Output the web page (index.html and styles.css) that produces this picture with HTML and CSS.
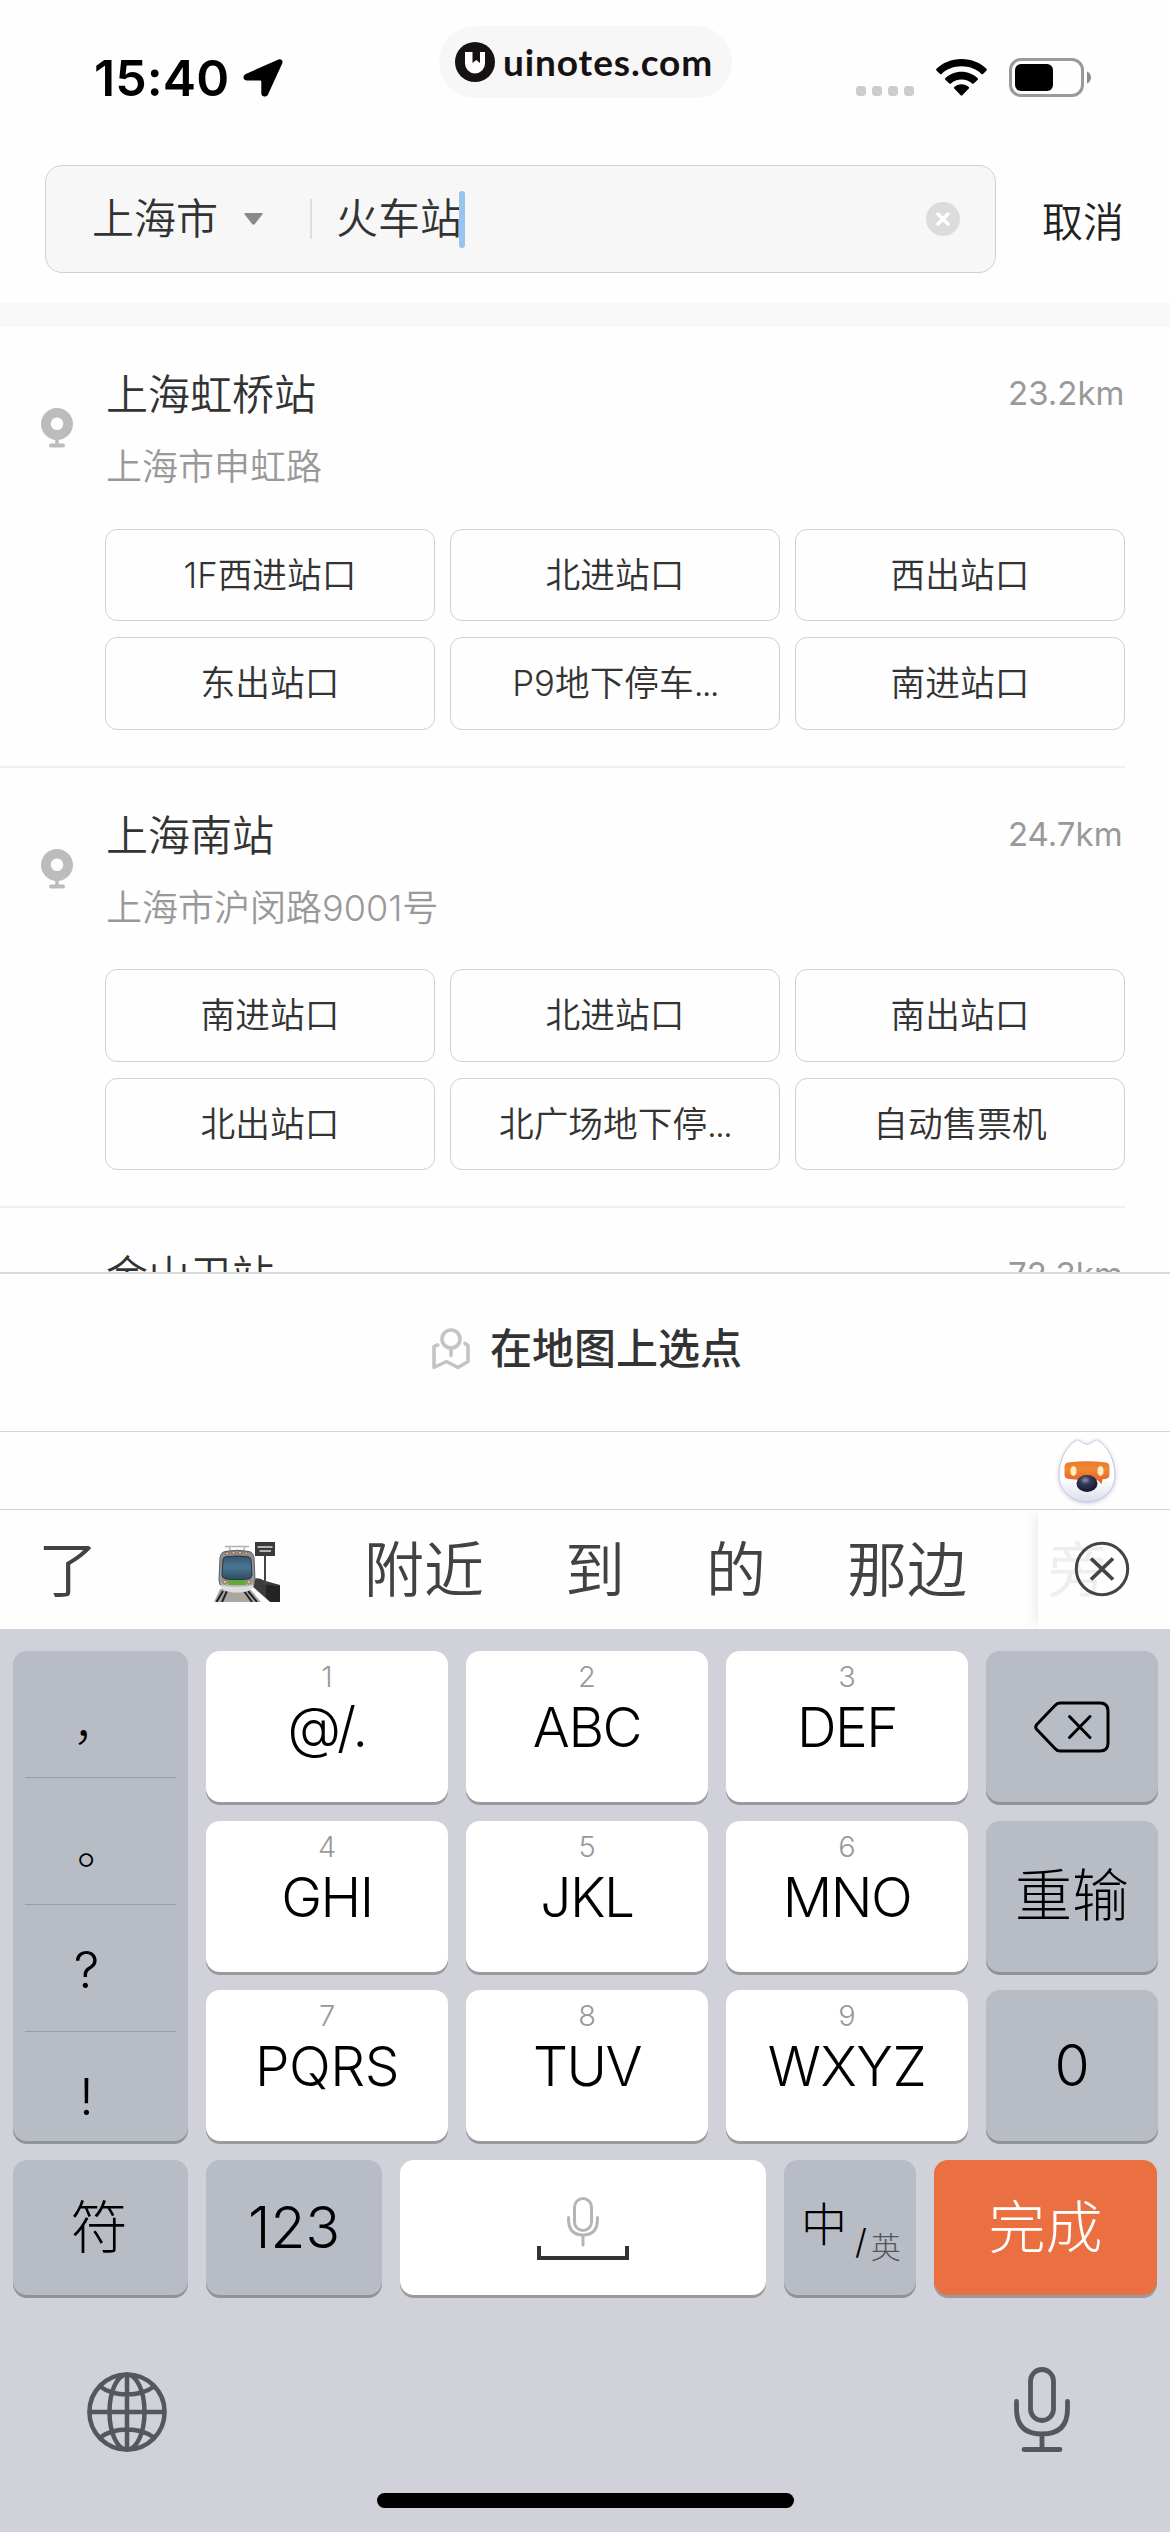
FILE: index.html
```html
<!DOCTYPE html>
<html lang="zh-CN">
<head>
<meta charset="utf-8">
<title>选择地点</title>
<link rel="stylesheet" href="styles.css">
</head>
<body>
<div class="screen">
  <header class="status">
    <div class="status-left">
      <span class="time">15:40</span>
      <svg class="locate" viewBox="0 0 40 38" width="40" height="38"><path d="M35.500 .6C38 -.4 40.300 1.500 39.300 4.200L25 35.500C23.700 38.600 18.300 38.200 18.300 34.600V22.600Q18.300 21.500 17.200 21.500H4.200C-.2 21.500 -.8 16.500 2.800 14.900Z"/></svg>
    </div>
    <div class="brand">
      <svg viewBox="0 0 40 40" width="40" height="40"><circle cx="20" cy="20" r="20" fill="#161212"/><path d="M10 10h8v9l3.500-3.200 3.500 3.200v-9h5v11.500a10 10 0 0 1-20 0Z" fill="#fff"/><path d="M17.500 9.500h7.500v11.500l-3.700-3-3.800 3Z" fill="#161212"/></svg>
      <span>uinotes.com</span>
    </div>
    <div class="status-right">
      <div class="dots"><i></i><i></i><i></i><i></i></div>
      <svg class="wifi" viewBox="0 0 51 37" width="51" height="37"><path d="M25.500 0C35.500 0 44.500 3.900 50.500 9.800Q51.300 10.600 50.500 11.400L47 14.900Q46.200 15.700 45.400 14.900C40 10 33.100 7.300 25.500 7.300S11 10 5.600 14.900Q4.800 15.700 4 14.900L.5 11.400Q-.3 10.600 .5 9.800C6.500 3.900 15.500 0 25.500 0Z"/><path d="M25.500 12.700C31.800 12.700 37.500 15.100 41.700 19.200Q42.400 20 41.700 20.800L37.700 24.500Q36.900 25.200 36.100 24.500C33.200 21.900 29.600 20.400 25.500 20.400S17.800 21.900 14.900 24.500Q14.100 25.200 13.300 24.500L9.300 20.800Q8.600 20 9.300 19.200C13.500 15.100 19.200 12.700 25.500 12.700Z"/><path d="M25.500 25.300C28.500 25.300 31 26.400 32.800 28.100Q33.500 28.900 32.800 29.600L26.300 36.300Q25.500 37 24.700 36.300L18.200 29.600Q17.500 28.900 18.200 28.100C20 26.400 22.500 25.300 25.500 25.300Z"/></svg>
      <svg class="battery" viewBox="0 0 83 39" width="83" height="39"><rect x="1.500" y="1.500" width="72" height="36" rx="10.500" fill="none" stroke="#9a9a9a" stroke-width="3"/><rect x="6" y="6" width="38" height="27" rx="6"/><path d="M78 13.500C80.600 14.500 82 17 82 19.500S80.600 24.500 78 25.500Z" fill="#8c8c8c"/></svg>
    </div>
  </header>

  <div class="search">
    <div class="field">
      <span class="city">上海市</span>
      <svg class="caret" viewBox="0 0 19 12" width="19" height="12"><path d="M1.500 0H17.500Q19.500 0 18.200 1.800L10.800 11Q9.500 12.600 8.200 11L.8 1.800Q-.5 0 1.500 0Z" fill="#8a8a8a"/></svg>
      <i class="split"></i>
      <span class="query">火车站</span>
      <i class="cursor"></i>
      <svg class="clear" viewBox="0 0 34 34" width="34" height="34"><circle cx="17" cy="17" r="17" fill="#dcdcdc"/><path d="M12 12l10 10M22 12L12 22" stroke="#fff" stroke-width="3.500" stroke-linecap="round"/></svg>
    </div>
    <span class="cancel">取消</span>
  </div>

  <main class="results">
    <section class="place">
      <svg class="pin" viewBox="0 0 32 40" width="32" height="40"><path fill-rule="evenodd" d="M16 0a16 16 0 1 1 0 32a16 16 0 1 1 0-32ZM16 9.500a6.300 6.300 0 1 0 0 12.600a6.300 6.300 0 1 0 0-12.600Z"/><rect x="14.200" y="30" width="3.600" height="7"/><rect x="8" y="35.600" width="16" height="4" rx="2"/></svg>
      <div class="info">
        <div class="head"><h2>上海虹桥站</h2><span class="km">23.2km</span></div>
        <p>上海市申虹路</p>
        <div class="chips"><span>1F西进站口</span><span>北进站口</span><span>西出站口</span><span>东出站口</span><span>P9地下停车<small>...</small></span><span>南进站口</span></div>
      </div>
    </section>
    <section class="place">
      <svg class="pin" viewBox="0 0 32 40" width="32" height="40"><path fill-rule="evenodd" d="M16 0a16 16 0 1 1 0 32a16 16 0 1 1 0-32ZM16 9.500a6.300 6.300 0 1 0 0 12.600a6.300 6.300 0 1 0 0-12.600Z"/><rect x="14.200" y="30" width="3.600" height="7"/><rect x="8" y="35.600" width="16" height="4" rx="2"/></svg>
      <div class="info">
        <div class="head"><h2>上海南站</h2><span class="km">24.7km</span></div>
        <p>上海市沪闵路9001号</p>
        <div class="chips"><span>南进站口</span><span>北进站口</span><span>南出站口</span><span>北出站口</span><span>北广场地下停<small>...</small></span><span>自动售票机</span></div>
      </div>
    </section>
    <section class="place">
      <i class="pin-space"></i>
      <div class="info">
        <div class="head"><h2>金山卫站</h2><span class="km">72.3km</span></div>
      </div>
    </section>
  </main>

  <div class="map-pick">
    <svg viewBox="0 0 38 42" width="38" height="42" fill="none" stroke="#c4c4c4" stroke-width="3.600" stroke-linecap="round" stroke-linejoin="round"><circle cx="19" cy="11" r="9"/><path d="M19 20.500V27.500M5.800 17L2 18.500V39.500L14.500 33.500L26 39.500L36 33.500V17.500L33 15.500"/></svg>
    <span>在地图上选点</span>
  </div>

  <div class="assist">
    <svg viewBox="0 0 66 72" width="66" height="72">
      <defs>
        <linearGradient id="face" x1="0" y1="0" x2="0" y2="1"><stop offset="0" stop-color="#fff"/><stop offset=".62" stop-color="#fff"/><stop offset="1" stop-color="#d9deea"/></linearGradient>
        <linearGradient id="visor" x1="0" y1="0" x2="0" y2="1"><stop offset="0" stop-color="#e9792b"/><stop offset=".35" stop-color="#ef8933"/><stop offset="1" stop-color="#e05a2c"/></linearGradient>
        <radialGradient id="nose" cx=".42" cy=".3" r=".7"><stop offset="0" stop-color="#8d93ab"/><stop offset=".35" stop-color="#363a58"/><stop offset="1" stop-color="#14142e"/></radialGradient>
      </defs>
      <path class="fox" d="M22.500 5.200C25.500 3.800 28 9.200 33 9.200S40.500 3.800 43.500 5.200C53 10 61 25 61 40C61 56 48 67 33 67S5 56 5 40C5 25 13 10 22.500 5.200Z" fill="url(#face)" stroke="#c3c8da" stroke-width="1"/>
      <path d="M14 27.500Q33 25 52 27.500Q55.500 28 55.500 32V39.500Q55.500 43.500 51 44L48.500 44.300L47.500 49L43.500 44.900Q33 46 15 44Q10.500 43.500 10.500 39.500V32Q10.500 28 14 27.500Z" fill="url(#visor)"/>
      <ellipse cx="19.500" cy="36" rx="3.200" ry="5" fill="#fff0c8" stroke="#f6a94c" stroke-width=".8"/><ellipse cx="46.500" cy="36" rx="3.200" ry="5" fill="#fff0c8" stroke="#f6a94c" stroke-width=".8"/>
      <ellipse cx="33" cy="48.500" rx="10.500" ry="8.500" fill="url(#nose)"/>
    </svg>
  </div>

  <div class="candidates">
    <span class="first">了</span>
    <svg class="train" viewBox="0 0 66 60" width="66" height="60">
      <defs>
        <linearGradient id="glass" x1="0" y1="0" x2="0" y2="1"><stop offset="0" stop-color="#36566f"/><stop offset=".45" stop-color="#4b7693"/><stop offset="1" stop-color="#2c4b63"/></linearGradient>
        <linearGradient id="body" x1="0" y1="0" x2="0" y2="1"><stop offset="0" stop-color="#8b8b8b"/><stop offset=".75" stop-color="#9c9c9c"/><stop offset="1" stop-color="#d8d8d8"/></linearGradient>
      </defs>
      <path d="M40 37Q44 35 50 38.500L66 43V60H56L38 44Z" fill="#3c3c3c"/><path d="M52 43L66 44V60H57L52 55Z" fill="#242424"/>
      <path d="M6 47H36L47 60H0Z" fill="#a9a79f"/><path d="M9 49L2.500 60M13 49L8 60M30 49L38 60M34 49L43 60" stroke="#222" stroke-width="2"/>
      <path d="M11 4.500H35M15 4.500L17 10M31 4.500L29 10" stroke="#b0b0b0" stroke-width="1.400" fill="none"/>
      <path d="M11 9.500Q23 7 35 9.500Q39.500 10.500 40 16L41 38Q41 49.500 23 49.500T5 38L6 16Q6.500 10.500 11 9.500Z" fill="url(#body)" stroke="#5c5c5c" stroke-width="1"/>
      <path d="M6 43Q23 47 40 43Q38 50.500 23 50.500T6 43Z" fill="#dedede"/>
      <path d="M11 15Q23 13 35 15Q37 15.500 37 18L38 33Q38 36.500 34 37Q23 38.500 12 37Q8 36.500 8 33L9 18Q9 15.500 11 15Z" fill="url(#glass)" stroke="#24333f" stroke-width="1"/>
      <rect x="14" y="38" width="18" height="5" rx="1" fill="#62a93c"/>
      <g fill="#e0ba90" stroke="#6a4a3a" stroke-width=".6"><circle cx="11" cy="40" r="2"/><circle cx="35" cy="40" r="2"/><circle cx="13" cy="11.500" r="1.600"/><circle cx="19.500" cy="10.800" r="1.600"/><circle cx="26" cy="10.800" r="1.600"/><circle cx="32" cy="11.500" r="1.600"/></g>
      <path d="M51 14V42" stroke="#444" stroke-width="2"/><rect x="41" y="0" width="20" height="14" fill="#3a3a3a"/><path d="M43.500 5H58.500M45.500 9H57" stroke="#ddd" stroke-width="1.500"/>
    </svg>
    <span>附近</span><span>到</span><span>的</span><span>那边</span><span class="faded">旁</span>
    <div class="close">
      <svg viewBox="0 0 56 56" width="56" height="56" fill="none" stroke="#444" stroke-width="3"><circle cx="28" cy="28" r="25.700"/><path d="M17 17.500L39 38.500M39 17.500L17 38.500" stroke-width="3.800"/></svg>
    </div>
  </div>

  <div class="keyboard">
    <div class="keys">
      <div class="key gray marks"><span class="cn comma">，</span><span class="cn">。</span><span>?</span><span>!</span></div>
      <div class="key"><small>1</small><b>@/.</b></div>
      <div class="key"><small>2</small><b>ABC</b></div>
      <div class="key"><small>3</small><b>DEF</b></div>
      <div class="key gray"><svg viewBox="0 0 76 52" width="76" height="52" fill="none" stroke="#000" stroke-width="3" stroke-linecap="round" stroke-linejoin="round"><path d="M26 2H66Q74 2 74 10V42Q74 50 66 50H26Q23 50 21 47.500L2.800 28.500Q.6 26 2.800 23.500L21 4.500Q23 2 26 2Z"/><path d="M35.500 15.500L56 36.500M56 15.500L35.500 36.500"/></svg></div>
      <div class="key"><small>4</small><b>GHI</b></div>
      <div class="key"><small>5</small><b>JKL</b></div>
      <div class="key"><small>6</small><b>MNO</b></div>
      <div class="key gray"><em>重输</em></div>
      <div class="key"><small>7</small><b class="wide">PQRS</b></div>
      <div class="key"><small>8</small><b>TUV</b></div>
      <div class="key"><small>9</small><b class="wide">WXYZ</b></div>
      <div class="key gray"><em>0</em></div>
    </div>
    <div class="bottom-keys">
      <div class="key gray"><em class="symbol">符</em></div>
      <div class="key gray"><em>123</em></div>
      <div class="key space">
        <svg viewBox="0 0 92 64" width="92" height="64" fill="none"><g stroke="#b5b5b5" stroke-width="3" stroke-linecap="round"><rect x="37.500" y="1.500" width="17" height="32" rx="8.500"/><path d="M31.500 20.500V22Q31.500 38 46 38T60.500 22V20.500M46 38V48"/></g><path d="M2 49V61H90V49" stroke="#333" stroke-width="4"/></svg>
      </div>
      <div class="key gray lang"><span class="zh">中</span><span class="slash">/</span><span class="en">英</span></div>
      <div class="key done"><em>完成</em></div>
    </div>
    <div class="tools">
      <svg viewBox="0 0 80 80" width="80" height="80" fill="none" stroke="#54575c" stroke-width="4.500"><circle cx="40" cy="40" r="37.600"/><ellipse cx="40" cy="40" rx="17.500" ry="37.600"/><path d="M40 2V78M2 40H78M13 14.500Q24 22.500 40 22.500T67 14.500M13 65.500Q24 57.500 40 57.500T67 65.500"/></svg>
      <svg viewBox="0 0 56 86" width="56" height="86" fill="none" stroke="#54575c" stroke-width="4.800" stroke-linecap="round"><rect x="16.500" y="2.500" width="23" height="51" rx="11.500"/><path d="M2.500 34.500V42Q2.500 67 28 67T53.500 42V34.500M28 67V82M10 82.500H46"/></svg>
    </div>
    <i class="home"></i>
  </div>
</div>
</body>
</html>
```
FILE: styles.css
```css
* { box-sizing: border-box; margin: 0; padding: 0; }

body {
  width: 1170px;
  background: #fefefe;
  color: #333;
  font-family: Inter, "Noto Sans CJK SC", sans-serif;
  font-weight: 350;
}

svg, i { display: block; flex: none; }

.screen {
  display: flex;
  flex-direction: column;
  width: 1170px;
  height: 2532px;
  overflow: hidden;
}

/* status bar */
.status {
  display: flex;
  flex: none;
  align-items: flex-start;
  height: 165px;
}
.status-left { display: flex; width: 439px; padding: 48px 0 0 94px; }
.time {
  width: 149px;
  font-size: 50px;
  font-weight: 600;
  line-height: 60px;
  letter-spacing: 0.1px;
  color: #000;
}
.locate { margin-top: 11px; }
.brand {
  display: flex;
  align-items: center;
  gap: 8px;
  width: 293px;
  height: 72px;
  margin-top: 26px;
  padding-left: 16px;
  border-radius: 36px;
  background: #f7f7f7;
  color: #161212;
  font: 700 37px/44px Lato, sans-serif;
  letter-spacing: 0.9px;
  white-space: nowrap;
}
.status-right { display: flex; padding: 58px 0 0 124px; }
.dots { display: flex; gap: 6px; padding-top: 28px; }
.dots i { width: 10px; height: 10px; border-radius: 3.5px; background: #ccc; }
.wifi { margin: 1px 22px 0; }

/* search */
.search {
  display: flex;
  flex: none;
  height: 162px;
  padding-left: 45px;
  border-bottom: 24px solid #f8f8f8;
}
.field {
  display: flex;
  align-items: center;
  width: 951px;
  height: 108px;
  padding-left: 46px;
  border: 1.5px solid #d0d0d0;
  border-radius: 17px;
  background: #f7f7f7;
  font-size: 42px;
  line-height: 60px;
}
.caret { margin: 0 47px 0 26px; }
.split { width: 2px; height: 40px; margin-right: 24px; background: #ddd; }
.cursor { width: 6px; height: 57px; margin-left: -3px; border-radius: 3px; background: #99c4ee; }
.clear { margin-left: auto; margin-right: 35px; }
.cancel { margin: 27px 0 0 46px; font-size: 41px; line-height: 60px; color: #222; }

/* results */
.results { flex: none; height: 945px; overflow: hidden; }
.place {
  display: flex;
  width: 1125px;
  height: 440.5px;
  padding: 38px 0 0 41px;
  border-bottom: 2px solid #efefef;
}
.pin { margin: 43px 32px 0 0; fill: #bcbcbc; }
.pin-space { width: 64px; }
.info { width: 1020px; }
.head { display: flex; justify-content: space-between; }
h2 { padding-left: 1px; font-size: 42px; font-weight: 350; line-height: 60px; }
.km { width: 117px; font-size: 33px; font-weight: 400; line-height: 56px; color: #999; }
.info p { padding: 16px 0 0 1px; font-size: 36px; line-height: 52px; color: #999; }
.chips {
  display: grid;
  grid-template-columns: repeat(3, 330px);
  grid-auto-rows: 92.5px;
  gap: 16px 15px;
  margin-top: 35.5px;
}
.chips span {
  border: 1.5px solid #d0d0d0;
  border-radius: 12px;
  font-size: 34.7px;
  line-height: 91px;
  text-align: center;
}
.chips small { font-size: 34.7px; letter-spacing: -1.8px; }

/* map shortcut */
.map-pick {
  display: flex;
  flex: none;
  justify-content: center;
  gap: 20px;
  height: 160px;
  padding: 54px 0 0 4px;
  border-top: 2px solid #dadada;
  border-bottom: 1px solid #d5d5d5;
  font-size: 42px;
  font-weight: 500;
  line-height: 42px;
}

.assist {
  display: flex;
  flex: none;
  justify-content: flex-end;
  height: 78px;
  padding: 3px 50px 0 0;
  border-bottom: 1px solid #d0d0d0;
}
.fox { filter: drop-shadow(0 1px 2px rgba(140, 150, 190, .45)); }

/* candidates */
.candidates {
  position: relative;
  display: flex;
  flex: none;
  align-items: center;
  gap: 81px;
  height: 119px;
  padding-left: 38px;
  overflow: hidden;
  font-size: 60px;
  line-height: 80px;
  color: #424242;
  white-space: nowrap;
}
.first { margin-right: 35px; }
.train { margin: 5px 3px 0 0; }
.faded { color: #eee; }
.close {
  position: absolute;
  top: 0;
  right: 0;
  width: 132px;
  height: 119px;
  padding: 31px 0 0 36px;
  box-shadow: -6px 0 12px -4px rgba(0, 0, 0, .09);
}

/* keyboard */
.keyboard {
  display: flex;
  flex: 1;
  flex-direction: column;
  padding: 22px 13px 0;
  background: #d0d1d9;
}
.keys {
  display: grid;
  grid-template-columns: 175px 242px 242px 242px 172px;
  grid-template-rows: 151px 151px 151px;
  gap: 18.5px 18px;
}
.key {
  display: flex;
  flex-direction: column;
  align-items: center;
  border-radius: 14px;
  background: #fff;
  box-shadow: 0 3px 0 #999a9e;
  color: #000;
  font-weight: 300;
}
.key small { margin-top: 11px; font-size: 29px; line-height: 30px; color: #999; }
.key b { margin-top: 5px; font-size: 55px; font-weight: 300; line-height: 60px; letter-spacing: -1.5px; }
.key .wide { letter-spacing: -0.5px; }
.key em { font-size: 57px; font-style: normal; line-height: 70px; }
.key .symbol { margin-right: 3px; }
.gray { justify-content: center; background: #b8bcc5; box-shadow: 0 3px 0 #909397; }
.marks { grid-row: span 3; justify-content: flex-start; }
.marks span {
  flex: none;
  width: 151px;
  height: 127px;
  padding: 26px 28px 0 0;
  border-bottom: 1.5px solid #999ca3;
  font-size: 51px;
  line-height: 78px;
  text-align: center;
}
.marks .cn { padding: 30px 0 0 52px; font-size: 47px; text-align: left; }
.marks .comma { padding: 33px 0 0 48px; }
.marks span:last-child { height: 109px; border: 0; }
.bottom-keys {
  display: grid;
  grid-template-columns: 175px 176px 366px 132px 223px;
  gap: 18px;
  height: 135px;
  margin-top: 19px;
}
.space { justify-content: flex-start; padding-top: 37px; }
.lang { flex-direction: row; align-items: flex-start; justify-content: flex-start; padding-left: 17px; }
.zh { margin-top: 34px; font-size: 46px; line-height: 60px; }
.slash { margin: 60px 4px 0 8px; font-size: 34px; line-height: 44px; }
.en { margin-top: 65px; font-size: 30px; line-height: 44px; color: #555; }
.done { justify-content: center; background: #ea6f41; color: #fff; }
.tools { display: flex; justify-content: space-between; margin-top: 72px; padding: 0 87px 0 74px; }
.tools svg:first-child { margin-top: 5px; }
.home { width: 417px; height: 15px; margin: 40px auto 0; border-radius: 8px; background: #000; }
```
